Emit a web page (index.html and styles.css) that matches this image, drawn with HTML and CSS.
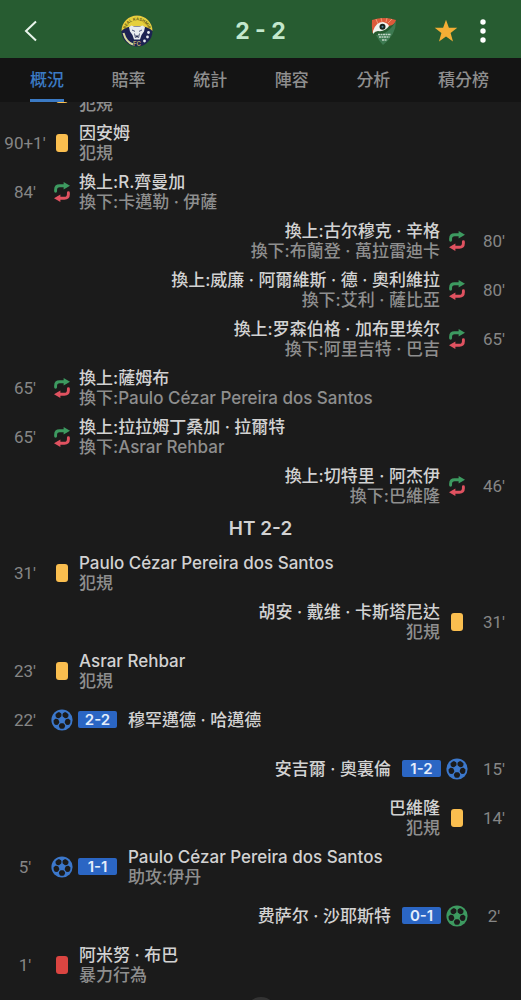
FILE: index.html
```html
<!DOCTYPE html>
<html lang="zh-Hant">
<head>
  <meta charset="UTF-8" />
  <meta name="viewport" content="width=device-width, initial-scale=1.0" />
  <title>2 - 2</title>
  <link rel="stylesheet" href="styles.css">
</head>
<body>
  <!-- shared icons -->
  <svg class="sprite" aria-hidden="true">
    <symbol id="swap" viewBox="0 0 16 20">
      <g class="swap-in">
        <path d="M1.6 9.200V7.800Q1.6 3.800 5.600 3.800H11" fill="none" stroke="currentColor" stroke-width="2.900" stroke-linecap="round"/>
        <path d="M9.600 0L16 3.800L9.600 7.600Z" fill="currentColor"/>
      </g>
      <g class="swap-out" transform="rotate(180 8 10)">
        <path d="M1.6 9.200V7.800Q1.6 3.800 5.600 3.800H11" fill="none" stroke="currentColor" stroke-width="2.900" stroke-linecap="round"/>
        <path d="M9.600 0L16 3.800L9.600 7.600Z" fill="currentColor"/>
      </g>
    </symbol>
    <symbol id="ball" viewBox="0 0 22 22">
      <circle cx="11" cy="11" r="10.6" fill="currentColor"/>
      <g fill="#1b1b1b">
        <path id="spot" d="M9.600 14.200H12.400Q14 15.200 14.200 17L13.200 19.200Q11 20.200 8.800 19.200L7.800 17Q8 15.200 9.600 14.200Z"/>
        <use href="#spot" transform="rotate(72 11 11)"/>
        <use href="#spot" transform="rotate(144 11 11)"/>
        <use href="#spot" transform="rotate(216 11 11)"/>
        <use href="#spot" transform="rotate(288 11 11)"/>
      </g>
    </symbol>
  </svg>

  <header class="top-bar">
    <button class="icon-button" aria-label="返回">
      <svg width="14" height="22" viewBox="0 0 14 22"><path d="M12 1.5L2 11L12 20.5" fill="none" stroke="#e9f5ec" stroke-width="2"/></svg>
    </button>
    <div class="match">
      <svg class="crest" viewBox="0 0 32 32">
        <circle cx="16" cy="16" r="15.5" fill="#1d2352"/>
        <path d="M0.5 16A15.5 15.5 0 0 1 31.5 16Q27 11 16 11Q5 11 0.5 16Z" fill="#e6cf3c"/>
        <path id="crest-arc" d="M5 13.500A11.500 11.500 0 0 1 27 13.500" fill="none"/>
        <text class="crest-text"><textPath href="#crest-arc" startOffset="50%" text-anchor="middle">REAL KASHMIR</textPath></text>
        <path d="M2.5 18Q5 27 12 29.5" fill="none" stroke="#d8d9a0" stroke-width="2"/>
        <path d="M8 12L10.5 10.5L13 11.5H19L21.5 10.5L24 12L23 16.5L20.5 20L19 24.5H13L11.5 20L9 16.5Z" fill="#e8ebef"/>
        <path d="M11 15L14 16.4M21 15L18 16.4M13.5 18.5L14.5 23M18.5 18.5L17.5 23" stroke="#545c7c" stroke-width="1"/>
        <path d="M14.2 20.5H17.8L16 23Z" fill="#232950"/>
        <circle cx="27.5" cy="17.5" r="1.4" fill="#e8ebef"/>
        <circle cx="26.5" cy="22" r="1.4" fill="#e8ebef"/>
        <circle cx="23.5" cy="26" r="1.4" fill="#e8ebef"/>
        <text class="crest-fc" x="16" y="30.5" text-anchor="middle">FC</text>
      </svg>
      <h1 class="score">2 - 2</h1>
      <svg class="crest" viewBox="0 0 32 32">
        <path d="M4 5Q16 1 28 5Q27 10 21 11L15 13L4.500 18Q3.500 11 4 5Z" fill="#dc5a3a"/>
        <path d="M8 4L10 9M13 3L14 7M19 3L18 7M24 4L20 8" stroke="#ef9673" stroke-width="1"/>
        <path d="M28 6Q28 20 15 30Q11 26 8 20Q20 20 28 6Z" fill="#3d7a51"/>
        <path d="M5 16Q8 7 15 7Q20 8 21 11Q17 17 10 16Q7 16 5 19Z" fill="#f1f3ee"/>
        <circle cx="14.500" cy="11.800" r="3" fill="#17251c"/>
        <circle cx="14.500" cy="11.800" r="1" fill="#4e86a8"/>
        <path d="M10 19.500H23M11 22H21.500M14 25H19" stroke="#bdd2c2" stroke-width="1.400" stroke-dasharray="2 .5"/>
      </svg>
    </div>
    <div class="actions">
      <button class="icon-button" aria-label="收藏">
        <svg width="24" height="24" viewBox="0 0 24 24"><path d="M12 0.8L14.9 8.8H23.300L16.600 13.900L19 22.500L12 17.400L5 22.500L7.400 13.900L0.700 8.800H9.100Z" fill="#f4ae35"/></svg>
      </button>
      <button class="icon-button" aria-label="更多">
        <svg width="6" height="24" viewBox="0 0 6 24"><g fill="#fff"><circle cx="3" cy="3" r="2.700"/><circle cx="3" cy="12" r="2.700"/><circle cx="3" cy="21" r="2.700"/></g></svg>
      </button>
    </div>
  </header>

  <nav class="tabs">
    <a class="tab active" href="#overview">概況</a>
    <a class="tab" href="#odds">賠率</a>
    <a class="tab" href="#stats">統計</a>
    <a class="tab" href="#lineup">陣容</a>
    <a class="tab" href="#analysis">分析</a>
    <a class="tab" href="#standings">積分榜</a>
  </nav>

  <main class="timeline">
    <ol class="events">
      <li class="event">
        <span class="minute"></span>
        <span class="icon"><i class="card yellow"></i></span>
        <div class="detail"><p class="sub">犯規</p></div>
      </li>
      <li class="event">
        <span class="minute">90+1'</span>
        <span class="icon"><i class="card yellow"></i></span>
        <div class="detail"><p>因安姆</p><p class="sub">犯規</p></div>
      </li>
      <li class="event">
        <span class="minute">84'</span>
        <span class="icon"><svg class="swap"><use href="#swap"/></svg></span>
        <div class="detail"><p>換上:R.齊曼加</p><p class="sub">換下:卡邁勒 · 伊薩</p></div>
      </li>
      <li class="event away">
        <span class="minute">80'</span>
        <span class="icon"><svg class="swap"><use href="#swap"/></svg></span>
        <div class="detail"><p>換上:古尔穆克 · 辛格</p><p class="sub">換下:布蘭登 · 萬拉雷迪卡</p></div>
      </li>
      <li class="event away">
        <span class="minute">80'</span>
        <span class="icon"><svg class="swap"><use href="#swap"/></svg></span>
        <div class="detail"><p>換上:威廉 · 阿爾維斯 · 德 · 奧利維拉</p><p class="sub">換下:艾利 · 薩比亞</p></div>
      </li>
      <li class="event away">
        <span class="minute">65'</span>
        <span class="icon"><svg class="swap"><use href="#swap"/></svg></span>
        <div class="detail"><p>換上:罗森伯格 · 加布里埃尔</p><p class="sub">換下:阿里吉特 · 巴吉</p></div>
      </li>
      <li class="event">
        <span class="minute">65'</span>
        <span class="icon"><svg class="swap"><use href="#swap"/></svg></span>
        <div class="detail"><p>換上:薩姆布</p><p class="sub">換下:Paulo Cézar Pereira dos Santos</p></div>
      </li>
      <li class="event">
        <span class="minute">65'</span>
        <span class="icon"><svg class="swap"><use href="#swap"/></svg></span>
        <div class="detail"><p>換上:拉拉姆丁桑加 · 拉爾特</p><p class="sub">換下:Asrar Rehbar</p></div>
      </li>
      <li class="event away">
        <span class="minute">46'</span>
        <span class="icon"><svg class="swap"><use href="#swap"/></svg></span>
        <div class="detail"><p>換上:切特里 · 阿杰伊</p><p class="sub">換下:巴維隆</p></div>
      </li>
      <li class="period">HT 2-2</li>
      <li class="event">
        <span class="minute">31'</span>
        <span class="icon"><i class="card yellow"></i></span>
        <div class="detail"><p>Paulo Cézar Pereira dos Santos</p><p class="sub">犯規</p></div>
      </li>
      <li class="event away">
        <span class="minute">31'</span>
        <span class="icon"><i class="card yellow"></i></span>
        <div class="detail"><p>胡安 · 戴维 · 卡斯塔尼达</p><p class="sub">犯規</p></div>
      </li>
      <li class="event">
        <span class="minute">23'</span>
        <span class="icon"><i class="card yellow"></i></span>
        <div class="detail"><p>Asrar Rehbar</p><p class="sub">犯規</p></div>
      </li>
      <li class="event">
        <span class="minute">22'</span>
        <span class="icon"><svg class="ball"><use href="#ball"/></svg></span>
        <span class="badge">2-2</span>
        <div class="detail"><p>穆罕邁德 · 哈邁德</p></div>
      </li>
      <li class="event away">
        <span class="minute">15'</span>
        <span class="icon"><svg class="ball"><use href="#ball"/></svg></span>
        <span class="badge">1-2</span>
        <div class="detail"><p>安吉爾 · 奧裏倫</p></div>
      </li>
      <li class="event away">
        <span class="minute">14'</span>
        <span class="icon"><i class="card yellow"></i></span>
        <div class="detail"><p>巴維隆</p><p class="sub">犯規</p></div>
      </li>
      <li class="event">
        <span class="minute">5'</span>
        <span class="icon"><svg class="ball"><use href="#ball"/></svg></span>
        <span class="badge">1-1</span>
        <div class="detail"><p>Paulo Cézar Pereira dos Santos</p><p class="sub">助攻:伊丹</p></div>
      </li>
      <li class="event away">
        <span class="minute">2'</span>
        <span class="icon"><svg class="ball penalty"><use href="#ball"/></svg></span>
        <span class="badge">0-1</span>
        <div class="detail"><p>费萨尔 · 沙耶斯特</p></div>
      </li>
      <li class="event">
        <span class="minute">1'</span>
        <span class="icon"><i class="card red"></i></span>
        <div class="detail"><p>阿米努 · 布巴</p><p class="sub">暴力行為</p></div>
      </li>
    </ol>
  </main>

  <div class="floating-dot"></div>
</body>
</html>
```
FILE: styles.css
```css
* {
  box-sizing: border-box;
}
body {
  margin: 0;
  min-height: 100vh;
  background: #1b1b1b;
  color: #d2d2d2;
  font-family: Inter, "Noto Sans CJK TC", "Noto Sans CJK SC", sans-serif;
  font-size: 17px;
  line-height: 20px;
}
p {
  margin: 0;
}
.sprite {
  display: block;
  width: 0;
  height: 0;
}

/* header */
.top-bar {
  display: grid;
  grid-template-columns: 1fr auto 1fr;
  align-items: center;
  height: 58px;
  padding: 4px 24px 0;
  background: #275c31;
}
.icon-button {
  display: flex;
  padding: 0;
  border: none;
  background: none;
  cursor: pointer;
}
.match {
  display: flex;
  align-items: center;
  gap: 82px;
}
.crest {
  width: 32px;
  height: 32px;
}
.crest-text {
  font-size: 4px;
  font-weight: 700;
  fill: #6b5f1c;
}
.crest-fc {
  font-size: 6px;
  font-weight: 700;
  fill: #b9a86a;
}
.score {
  margin: 0;
  color: #c3e8cd;
  font-size: 23px;
  font-weight: 700;
  line-height: 28px;
}
.actions {
  display: flex;
  justify-content: flex-end;
  align-items: center;
  gap: 22px;
  padding-right: 11px;
}

/* tabs */
.tabs {
  display: flex;
  justify-content: space-between;
  height: 44px;
  padding: 0 32px 0 30px;
  background: #141414;
}
.tab {
  border-bottom: 3px solid transparent;
  color: #8e8e8e;
  font-weight: 500;
  line-height: 44px;
  text-decoration: none;
}
.tab.active {
  border-color: #3b7ac4;
  color: #3b7ac4;
}

/* timeline */
.timeline {
  overflow: hidden;
}
.events {
  margin: -33px 0 0;
  padding: 0;
  list-style: none;
}
.event {
  display: flex;
  align-items: center;
  height: 49px;
  padding: 0 2px 0 0;
}
.event.away {
  flex-direction: row-reverse;
  text-align: right;
}
.minute {
  width: 50px;
  color: #868686;
  font-family: Roboto, sans-serif;
  font-weight: 400;
  text-align: center;
}
.icon {
  display: flex;
  justify-content: center;
  width: 24px;
}
.detail {
  padding: 0 5px;
  font-weight: 500;
}
.sub {
  color: #8e8e8e;
}
.detail p:only-child.sub {
  padding-top: 20px;
}
.period {
  height: 38px;
  color: #d2d2d2;
  font-size: 19px;
  font-weight: 600;
  line-height: 38px;
  text-align: center;
}
.card {
  width: 12px;
  height: 18px;
  border-radius: 3px;
}
.yellow {
  background: #fabe4f;
}
.red {
  background: #db4541;
}
.swap {
  width: 16px;
  height: 20px;
}
.swap-in {
  color: #3d9a60;
}
.swap-out {
  color: #e05260;
}
.ball {
  width: 22px;
  height: 22px;
  color: #3c78cc;
}
.ball.penalty {
  color: #3d9a60;
}
.badge {
  width: 39px;
  margin: 0 6px 0 4px;
  border-radius: 2px;
  background: #2b66c4;
  color: #e4edfb;
  font-size: 15px;
  font-weight: 600;
  line-height: 17px;
  text-align: center;
}
.away .badge {
  margin: 0 4px 0 6px;
}
.floating-dot {
  position: fixed;
  bottom: -27px;
  left: 50%;
  width: 30px;
  height: 30px;
  margin-left: -15px;
  border-radius: 50%;
  background: #333;
}
```
